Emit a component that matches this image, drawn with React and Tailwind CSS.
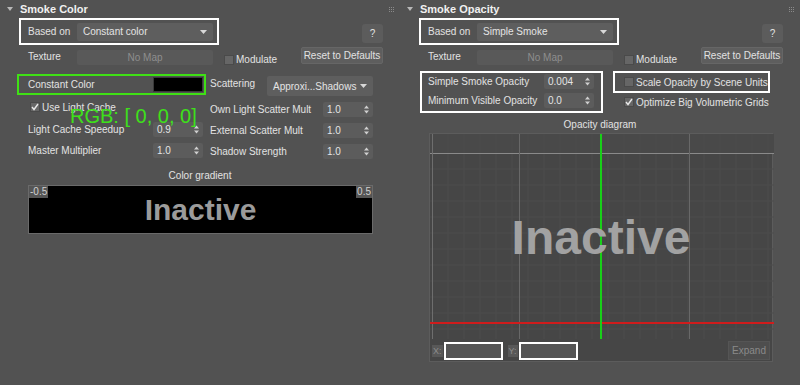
import React from 'react';

// small UI pieces in the 3ds Max dark style
const Arrow = () => (
  <svg width="7" height="4" viewBox="0 0 7 4" className="shrink-0">
    <polygon points="0,0 7,0 3.5,4" fill="#d8d8d8" />
  </svg>
);

const SpinArrows = () => (
  <svg width="5" height="9" viewBox="0 0 5 9" className="shrink-0">
    <polygon points="0,3.5 5,3.5 2.5,0.5" fill="#d0d0d0" />
    <polygon points="0,5.5 5,5.5 2.5,8.5" fill="#d0d0d0" />
  </svg>
);

const Dropdown = ({ label, className }) => (
  <div className={`flex items-center justify-between bg-[#5e5e5e] rounded-[2px] pl-[6px] pr-[6px] text-[#e4e4e4] ${className}`}>
    <span>{label}</span>
    <Arrow />
  </div>
);

const Spinner = ({ value }) => (
  <div className="w-[50px] h-[15px] shrink-0 flex items-center justify-between bg-[#5c5c5c] rounded-[2px] pl-[4px] pr-[4px] text-[#e4e4e4]">
    <span>{value}</span>
    <SpinArrows />
  </div>
);

const Checkbox = ({ checked }) => (
  <div className="w-[10px] h-[10px] bg-[#666] border border-[#4a4a4a] flex items-center justify-center shrink-0">
    {checked && (
      <svg width="8" height="8" viewBox="0 0 8 8">
        <polyline points="1,4 3,6.5 7,1" fill="none" stroke="#e8e8e8" strokeWidth="1.4" />
      </svg>
    )}
  </div>
);

const Header = ({ title }) => (
  <div className="h-[18px] flex items-center">
    <svg width="6" height="4" viewBox="0 0 6 4" className="ml-[7px] mr-[7px]">
      <polygon points="0,0 6,0 3,4" fill="#b8b8b8" />
    </svg>
    <span className="font-bold text-[11px] text-[#f0f0f0]">{title}</span>
    <div className="ml-auto mr-[6px] grid grid-cols-3 gap-[1px]">
      {[0, 1, 2, 3, 4, 5, 6, 7, 8].map((i) => (
        <div key={i} className="w-[1px] h-[1px] bg-[#8a8a8a]" />
      ))}
    </div>
  </div>
);

const TopRows = ({ basedOn }) => (
  <>
    <div className="flex items-start h-[29px]">
      <div className="ml-[19px] w-[200px] h-[27px] border-2 border-white flex items-center pl-[7px]">
        <span className="w-[49px]">Based on</span>
        <Dropdown label={basedOn} className="w-[136px] h-[18px]" />
      </div>
      <div className="ml-auto mr-[17px] mt-[6px] w-[21px] h-[19px] bg-[#5c5c5c] rounded-[3px] flex items-center justify-center">?</div>
    </div>
    <div className="flex items-start h-[27px]">
      <span className="ml-[28px] w-[49px] mt-[2px]">Texture</span>
      <div className="w-[136px] h-[15px] mt-[3px] bg-[#595959] rounded-[2px] flex items-center justify-center text-[#8e8e8e]">No Map</div>
      <div className="ml-[11px] mt-[5px] flex items-center">
        <Checkbox />
        <span className="ml-[2px]">Modulate</span>
      </div>
      <div className="ml-auto mr-[17px] w-[82px] h-[17px] bg-[#5e5e5e] border border-[#666] rounded-[2px] flex items-center justify-center">Reset to Defaults</div>
    </div>
  </>
);

const LabelSpin = ({ label, value, className }) => (
  <div className={`flex items-center justify-between ${className}`}>
    <span>{label}</span>
    <Spinner value={value} />
  </div>
);

const SmokeColor = () => (
  <div className="w-[400px] h-[385px] bg-[#525252] relative">
    <Header title="Smoke Color" />
    <TopRows basedOn="Constant color" />
    <div className="flex items-start">
      <div className="ml-[17px] w-[189px] h-[21px] border-2 border-[#3fe015] flex items-center pl-[9px] pr-[1px]">
        <span>Constant Color</span>
        <div className="ml-auto w-[50px] h-[15px] bg-black border border-[#3a3a3a]" />
      </div>
      <span className="ml-[4px] w-[57px] mt-[2px]">Scattering</span>
      <Dropdown label="Approxi...Shadows" className="w-[106px] h-[20px] mt-[2px]" />
    </div>
    <div className="flex">
      <div className="ml-[28px] w-[175px] pt-[4px]">
        <div className="flex items-center h-[14px] ml-[2px]">
          <Checkbox checked />
          <span className="ml-[2px]">Use Light Cache</span>
        </div>
        <LabelSpin label="Light Cache Speedup" value="0.9" className="mt-[8px]" />
        <LabelSpin label="Master Multiplier" value="1.0" className="mt-[6px]" />
      </div>
      <div className="ml-[7px] w-[163px] pt-[6px]">
        <LabelSpin label="Own Light Scatter Mult" value="1.0" />
        <LabelSpin label="External Scatter Mult" value="1.0" className="mt-[6px]" />
        <LabelSpin label="Shadow Strength" value="1.0" className="mt-[6px]" />
      </div>
    </div>
    <div className="mt-[10px] text-center leading-[14px]">Color gradient</div>
    <div className="ml-[28px] mt-[2px] w-[345px] h-[49px] bg-black border border-[#6a6a6a] relative flex items-center justify-center">
      <span className="font-bold text-[30px] text-[#9b9b9b] leading-none">Inactive</span>
      <span className="absolute left-0 top-0 bg-[#555] text-[#d0d0d0] text-[10px] leading-[12px] px-[1px]">-0.5</span>
      <span className="absolute right-0 top-0 bg-[#555] text-[#d0d0d0] text-[10px] leading-[12px] px-[1px]">0.5</span>
    </div>
    <div className="absolute left-[70px] top-[104px] text-[20px] leading-[24px] text-[#3ee01a]">RGB: [ 0, 0, 0]</div>
  </div>
);

const Diagram = () => {
  const minor = [];
  for (let x = 447; x < 773; x += 16) minor.push(<line key={'x' + x} x1={x - 429} y1="0" x2={x - 429} y2="205" stroke="#4c4c4c" />);
  for (let y = 168; y < 338; y += 16) minor.push(<line key={'y' + y} x1="0" y1={y - 133} x2="344" y2={y - 133} stroke="#4c4c4c" />);
  return (
    <div className="ml-[29px] mt-[1px] w-[344px] h-[229px] bg-[#464646] border border-[#5c5c5c] relative">
      <svg width="344" height="205" viewBox="0 0 344 205" className="block">
        <rect x="0" y="0" width="344" height="19" fill="#494949" />
        {minor}
        <line x1="0" y1="19.5" x2="344" y2="19.5" stroke="#8a8a8a" />
        <line x1="2.5" y1="0" x2="2.5" y2="205" stroke="#6e6e6e" />
        <line x1="89.5" y1="0" x2="89.5" y2="205" stroke="#686868" />
        <line x1="259.5" y1="0" x2="259.5" y2="205" stroke="#686868" />
        <line x1="0" y1="189" x2="344" y2="189" stroke="#d01c1c" strokeWidth="2" />
        <line x1="171" y1="0" x2="171" y2="205" stroke="#18d018" strokeWidth="2" />
      </svg>
      <div className="absolute left-0 right-0 top-[80px] flex justify-center">
        <span className="font-bold text-[48px] leading-none text-[#a2a2a2]">Inactive</span>
      </div>
      <div className="flex items-center h-[23px]">
        <span className="ml-[2px] text-[9px] text-[#8c8c8c] bg-[#585858] leading-[12px] px-[1px]">X:</span>
        <div className="ml-[1px] w-[59px] h-[18px] border-2 border-white bg-[#555]" />
        <span className="ml-[5px] text-[9px] text-[#8c8c8c] bg-[#585858] leading-[12px] px-[1px]">Y:</span>
        <div className="ml-[1px] w-[59px] h-[18px] border-2 border-white bg-[#555]" />
        <div className="ml-auto mr-[2px] w-[42px] h-[19px] bg-[#4e4e4e] border border-[#555] flex items-center justify-center text-[#8a8a8a]">Expand</div>
      </div>
    </div>
  );
};

const SmokeOpacity = () => (
  <div className="w-[400px] h-[385px] bg-[#525252]">
    <Header title="Smoke Opacity" />
    <TopRows basedOn="Simple Smoke" />
    <div className="flex items-start -mt-[3px]">
      <div className="ml-[20px] w-[183px] h-[42px] border-2 border-white pl-[6px] pr-[7px] pt-[1px]">
        <LabelSpin label="Simple Smoke Opacity" value="0.004" />
        <LabelSpin label="Minimum Visible Opacity" value="0.0" className="mt-[4px]" />
      </div>
      <div className="ml-[10px]">
        <div className="w-[157px] h-[22px] border-2 border-white flex items-center pl-[9px]">
          <Checkbox />
          <span className="ml-[2px]">Scale Opacity by Scene Units</span>
        </div>
        <div className="flex items-center h-[14px] ml-[11px] mt-[2px]">
          <Checkbox checked />
          <span className="ml-[2px]">Optimize Big Volumetric Grids</span>
        </div>
      </div>
    </div>
    <div className="mt-[5px] text-center leading-[14px]">Opacity diagram</div>
    <Diagram />
  </div>
);

export default function App() {
  return (
    <div className="w-[800px] h-[385px] flex bg-[#525252] text-[10px] text-[#e2e2e2] whitespace-nowrap font-['Liberation_Sans',Arial,sans-serif] overflow-hidden">
      <SmokeColor />
      <SmokeOpacity />
    </div>
  );
}
